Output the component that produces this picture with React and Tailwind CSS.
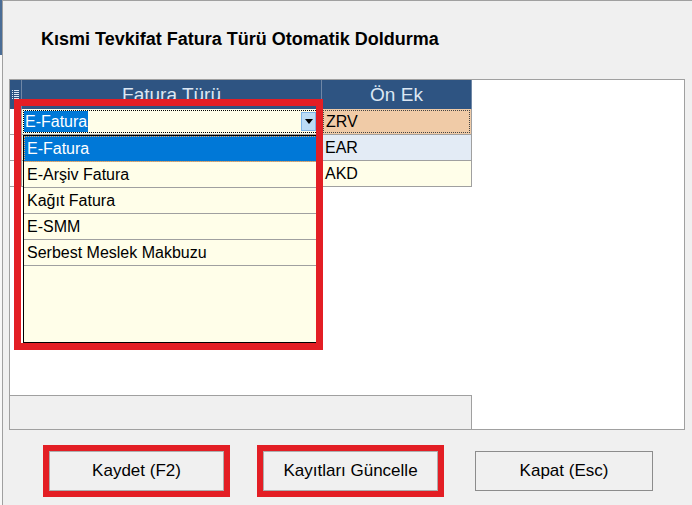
import React from "react";

const rows = [
  { code: "ZRV", bg: "bg-[#f0cba7]", focus: true },
  { code: "EAR", bg: "bg-[#e3ebf5]", focus: false },
  { code: "AKD", bg: "bg-[#fffee9]", focus: false },
];

const items = ["E-Fatura", "E-Arşiv Fatura", "Kağıt Fatura", "E-SMM", "Serbest Meslek Makbuzu"];

const IndicatorIcon = () => (
  <svg width="7" height="11" viewBox="0 0 7 11">
    {[0, 2, 4, 6, 8].map((y) => (
      <g key={y} fill="#dfe8f3">
        <rect x="0" y={y + 1} width="1" height="1" />
        <rect x="2" y={y + 1} width="5" height="1" />
      </g>
    ))}
  </svg>
);

const ComboCell = () => (
  <div className="w-[300px] h-[26px] border-r border-b border-[#a0a0a0] bg-[#fffee9] p-[1px]">
    <div className="h-full flex items-stretch border border-dotted border-black">
      <span className="bg-[#0078d7] text-white px-[1px] flex items-center text-[16px]">E-Fatura</span>
      <div className="flex-1" />
      <div className="w-[15px] my-[1px] mr-[3px] bg-[#bcdcf5] border border-[#7db4e8] flex items-center justify-center">
        <svg width="8" height="5" viewBox="0 0 8 5">
          <path d="M0 0h8L4 5z" fill="#000" />
        </svg>
      </div>
    </div>
  </div>
);

const App = () => {
  return (
    <div className="relative w-[692px] h-[505px] overflow-hidden bg-[#f0f0f0] flex font-['Liberation_Sans',Arial,sans-serif] text-black">
      {/* edge of the window behind */}
      <div className="w-[2px] flex flex-col">
        <div className="h-[55px] bg-[#4a6d96]" />
        <div className="flex-1 bg-[#f8f8f8]" />
      </div>

      <div className="flex-1 flex flex-col border-l border-t border-[#a0a0a0]">
        <div className="h-[78px] pl-[38px] pt-[27px]">
          <h1 className="text-[18px] leading-[22px] font-bold">Kısmi Tevkifat Fatura Türü Otomatik Doldurma</h1>
        </div>

        {/* grid */}
        <div className="ml-[6px] w-[676px] h-[351px] border border-[#a0a0a0] bg-white flex">
          <div className="w-[462px] flex flex-col">
            <div className="h-[29px] flex bg-[#2e5482] text-[#dce7f3] text-[19px]">
              <div className="w-[12px] border-r border-[#6f87a6] flex justify-center pt-[9px]">
                <IndicatorIcon />
              </div>
              <div className="w-[300px] border-r border-[#6f87a6] flex items-center justify-center pt-[2px]">Fatura Türü</div>
              <div className="w-[150px] border-r border-[#6f87a6] flex items-center justify-center pt-[2px]">Ön Ek</div>
            </div>

            {rows.map((r, i) => (
              <div key={r.code} className="flex h-[26px] text-[16px]">
                <div className="w-[12px] border-r border-b border-[#a0a0a0] bg-white" />
                {i === 0 ? (
                  <ComboCell />
                ) : (
                  <div className="w-[300px] border-r border-b border-[#a0a0a0] bg-[#fffee9]" />
                )}
                <div className={`w-[150px] border-r border-b border-[#a0a0a0] ${r.bg} p-[1px]`}>
                  <div className={`h-full flex items-center pl-[2px] ${r.focus ? "border border-dotted border-[#444]" : ""}`}>
                    {r.code}
                  </div>
                </div>
              </div>
            ))}

            <div className="flex-1" />
            <div className="h-[34px] bg-[#f0f0f0] border-t border-r border-[#a0a0a0]" />
          </div>
          <div className="flex-1" />
        </div>

        {/* buttons */}
        <div className="flex pt-[21px] pl-[46px] text-[17px]">
          <button className="w-[175px] h-[40px] bg-[#f0f0f0] border border-[#adadad] outline-[6px] outline-solid outline-[#e31e24]">
            Kaydet (F2)
          </button>
          <button className="ml-[39px] w-[175px] h-[40px] bg-[#f0f0f0] border border-[#adadad] outline-[6px] outline-solid outline-[#e31e24]">
            Kayıtları Güncelle
          </button>
          <button className="ml-[37px] w-[178px] h-[40px] bg-[#f0f0f0] border border-[#8c8c8c]">
            Kapat (Esc)
          </button>
        </div>
      </div>

      {/* open dropdown list */}
      <div className="absolute left-[23px] top-[135px] w-[295px] h-[208px] border border-black bg-[#fffee9] text-[16px]">
        {items.map((t, i) => (
          <div
            key={t}
            className={`h-[26px] border-b border-[#a0a0a0] flex items-center pl-[3px] ${
              i === 0 ? "bg-[#0078d7] text-white outline outline-dotted outline-[#e8a860] -outline-offset-1" : ""
            }`}
          >
            {t}
          </div>
        ))}
      </div>

      {/* annotation box */}
      <div className="absolute left-[14px] top-[99px] w-[309px] h-[251px] border-[7px] border-[#e31e24]" />
    </div>
  );
};

export default App;
